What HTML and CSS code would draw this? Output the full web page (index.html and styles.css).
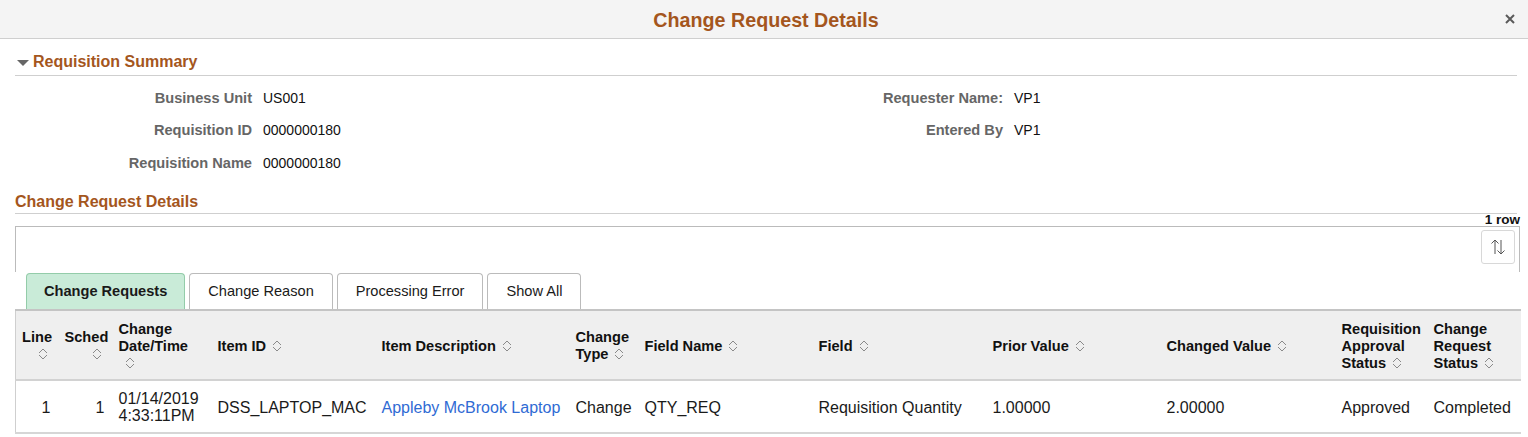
FILE: index.html
```html
<!DOCTYPE html>
<html lang="en">
<head>
<meta charset="utf-8">
<title>Change Request Details</title>
<link rel="stylesheet" href="styles.css">
</head>
<body>
<header class="topbar">
  <div></div>
  <h1 class="title">Change Request Details</h1>
  <button class="close" aria-label="Close">
    <svg width="10" height="10" viewBox="0 0 10 10"><path d="M1 1 L9 9 M9 1 L1 9" stroke="#5a5a5a" stroke-width="2" fill="none"/></svg>
  </button>
</header>

<main class="content">
  <h2 class="section-head">
    <svg class="caret" width="12" height="6" viewBox="0 0 12 6"><path d="M0 0 H12 L6 6 Z" fill="#666"/></svg>
    <span>Requisition Summary</span>
  </h2>

  <div class="fields">
    <div class="lbl">Business Unit</div><div class="val">US001</div>
    <div class="lbl">Requester Name:</div><div class="val">VP1</div>
    <div class="lbl">Requisition ID</div><div class="val">0000000180</div>
    <div class="lbl">Entered By</div><div class="val">VP1</div>
    <div class="lbl">Requisition Name</div><div class="val">0000000180</div>
    <div></div><div></div>
  </div>

  <h3 class="sub-head">Change Request Details</h3>
  <div class="rowcount">1 row</div>

  <div class="toolbox">
    <button class="sortbtn" aria-label="Sort">
      <svg width="16" height="18" viewBox="0 0 16 18"><path d="M5 16 V2 M1.5 5.5 L5 2 L8.5 5.5 M11 2 V16 M7.5 12.5 L11 16 L14.5 12.5" stroke="#555" stroke-width="1" fill="none"/></svg>
    </button>
  </div>

  <div class="tabs">
    <div class="tab active">Change Requests</div>
    <div class="tab">Change Reason</div>
    <div class="tab">Processing Error</div>
    <div class="tab">Show All</div>
  </div>

  <table class="grid">
    <colgroup>
      <col class="c-line"><col class="c-sched"><col class="c-date"><col class="c-item"><col class="c-desc"><col class="c-type"><col class="c-fname"><col class="c-field"><col class="c-prior"><col class="c-changed"><col class="c-appr"><col class="c-status">
    </colgroup>
    <thead>
      <tr>
        <th class="num">Line<br><svg class="sort sort-r" width="10" height="12" viewBox="0 0 10 12"><path d="M1 5 L5 1 L9 5 M1 7 L5 11 L9 7" stroke="#8a8a8a" fill="none"/></svg></th>
        <th class="num">Sched<br><svg class="sort sort-r" width="10" height="12" viewBox="0 0 10 12"><path d="M1 5 L5 1 L9 5 M1 7 L5 11 L9 7" stroke="#8a8a8a" fill="none"/></svg></th>
        <th>Change<br>Date/Time<br><svg class="sort" width="10" height="12" viewBox="0 0 10 12"><path d="M1 5 L5 1 L9 5 M1 7 L5 11 L9 7" stroke="#8a8a8a" fill="none"/></svg></th>
        <th>Item ID<svg class="sort" width="10" height="12" viewBox="0 0 10 12"><path d="M1 5 L5 1 L9 5 M1 7 L5 11 L9 7" stroke="#8a8a8a" fill="none"/></svg></th>
        <th>Item Description<svg class="sort" width="10" height="12" viewBox="0 0 10 12"><path d="M1 5 L5 1 L9 5 M1 7 L5 11 L9 7" stroke="#8a8a8a" fill="none"/></svg></th>
        <th>Change<br>Type<svg class="sort" width="10" height="12" viewBox="0 0 10 12"><path d="M1 5 L5 1 L9 5 M1 7 L5 11 L9 7" stroke="#8a8a8a" fill="none"/></svg></th>
        <th>Field Name<svg class="sort" width="10" height="12" viewBox="0 0 10 12"><path d="M1 5 L5 1 L9 5 M1 7 L5 11 L9 7" stroke="#8a8a8a" fill="none"/></svg></th>
        <th>Field<svg class="sort" width="10" height="12" viewBox="0 0 10 12"><path d="M1 5 L5 1 L9 5 M1 7 L5 11 L9 7" stroke="#8a8a8a" fill="none"/></svg></th>
        <th>Prior Value<svg class="sort" width="10" height="12" viewBox="0 0 10 12"><path d="M1 5 L5 1 L9 5 M1 7 L5 11 L9 7" stroke="#8a8a8a" fill="none"/></svg></th>
        <th>Changed Value<svg class="sort" width="10" height="12" viewBox="0 0 10 12"><path d="M1 5 L5 1 L9 5 M1 7 L5 11 L9 7" stroke="#8a8a8a" fill="none"/></svg></th>
        <th>Requisition<br>Approval<br>Status<svg class="sort" width="10" height="12" viewBox="0 0 10 12"><path d="M1 5 L5 1 L9 5 M1 7 L5 11 L9 7" stroke="#8a8a8a" fill="none"/></svg></th>
        <th>Change<br>Request<br>Status<svg class="sort" width="10" height="12" viewBox="0 0 10 12"><path d="M1 5 L5 1 L9 5 M1 7 L5 11 L9 7" stroke="#8a8a8a" fill="none"/></svg></th>
      </tr>
    </thead>
    <tbody>
      <tr>
        <td class="num">1</td>
        <td class="num">1</td>
        <td>01/14/2019<br>4:33:11PM</td>
        <td>DSS_LAPTOP_MAC</td>
        <td><a class="link" href="#">Appleby McBrook Laptop</a></td>
        <td>Change</td>
        <td>QTY_REQ</td>
        <td>Requisition Quantity</td>
        <td>1.00000</td>
        <td>2.00000</td>
        <td>Approved</td>
        <td>Completed</td>
      </tr>
    </tbody>
  </table>
</main>
</body>
</html>
```

FILE: styles.css
```css
* { box-sizing: border-box; }

body {
  margin: 0;
  font-family: "Liberation Sans", Arial, sans-serif;
  color: #222;
  background: #fff;
}

.topbar {
  height: 39px;
  background: #f4f4f4;
  border-bottom: 1px solid #cfcfcf;
  display: grid;
  grid-template-columns: 1fr auto 1fr;
  align-items: center;
}

.title {
  margin: 0 0 0 4px;
  font-size: 19.7px;
  font-weight: bold;
  color: #a4561d;
  line-height: 24px;
  padding-top: 1px;
}

.close {
  justify-self: end;
  margin-right: 13px;
  border: none;
  background: none;
  padding: 0;
  width: 10px;
  height: 10px;
  display: flex;
}

.content {
  padding: 0 8px 0 15px;
}

.section-head {
  margin: 13px 3px 0 0;
  font-size: 16px;
  font-weight: bold;
  color: #a4561d;
  line-height: 20px;
  padding: 0 0 3px 2px;
  border-bottom: 1px solid #cfcfcf;
  display: flex;
  align-items: center;
  gap: 4px;
}

.caret { margin-top: 1px; }

.fields {
  margin-top: 5px;
  display: grid;
  grid-template-columns: 237px 492px 237px 1fr;
  grid-auto-rows: 32.5px;
  column-gap: 11px;
  align-items: center;
}

.lbl {
  text-align: right;
  font-weight: bold;
  font-size: 14.6px;
  color: #666;
  white-space: nowrap;
  padding-top: 1px;
}

.val {
  font-size: 14px;
  color: #111;
  padding-top: 1px;
}

.sub-head {
  margin: 13.5px 3px 0 0;
  font-size: 16px;
  font-weight: bold;
  color: #a4561d;
  line-height: 20px;
  padding-bottom: 1px;
  border-bottom: 1px solid #cfcfcf;
}

.rowcount {
  text-align: right;
  font-weight: bold;
  font-size: 13.5px;
  line-height: 12px;
  color: #111;
}

.toolbox {
  border: 1px solid #bbb;
  border-bottom: none;
  padding: 3px 4px 8px 0;
  display: flex;
  justify-content: flex-end;
}

.sortbtn {
  width: 34px;
  height: 34px;
  border: 1px solid #d8d8d8;
  border-radius: 3px;
  background: #fff;
  display: flex;
  align-items: center;
  justify-content: center;
  padding: 0;
}

.tabs {
  display: flex;
  gap: 4px;
  padding-left: 11px;
  margin-top: 1px;
}

.tab {
  height: 36px;
  border: 1px solid #bbb;
  border-bottom: none;
  border-radius: 4px 4px 0 0;
  padding: 0 18px;
  font-size: 14.6px;
  line-height: 35px;
  color: #1a1a1a;
  background: #fff;
  white-space: nowrap;
}

.tab.active {
  background: #c9ebd8;
  border-color: #93cca9;
  font-weight: bold;
  padding: 0 17px;
}

.grid {
  width: 100%;
  table-layout: fixed;
  border-collapse: collapse;
  border-left: 1px solid #cfcfcf;
}

.c-line { width: 43px; }
.c-sched { width: 54px; }
.c-date { width: 99px; }
.c-item { width: 164px; }
.c-desc { width: 194px; }
.c-type { width: 69px; }
.c-fname { width: 174px; }
.c-field { width: 174px; }
.c-prior { width: 174px; }
.c-changed { width: 175px; }
.c-appr { width: 92px; }
.c-status { width: 93px; }

.grid thead tr {
  background: #efefef;
  border-top: 2px solid #c4c4c4;
  border-bottom: 2px solid #d2d2d2;
}

.grid th {
  height: 70px;
  padding: 2px 6px 0;
  text-align: left;
  vertical-align: middle;
  font-size: 14.6px;
  font-weight: bold;
  line-height: 17px;
  color: #111;
  white-space: nowrap;
}

.grid th.num {
  text-align: right;
  padding-right: 7px;
}

.sort {
  margin-left: 6px;
  vertical-align: -1px;
}

.sort-r {
  margin-left: 0;
  margin-right: 4px;
}

.grid tbody tr {
  border-bottom: 2px solid #d6d6d6;
}

.grid td {
  height: 53px;
  padding: 1px 6px 0;
  vertical-align: middle;
  font-size: 16px;
  line-height: 17px;
  color: #1a1a1a;
  white-space: nowrap;
}

.grid td.num {
  text-align: right;
  padding-right: 8px;
}

.link {
  color: #2f6bd4;
  text-decoration: none;
}
```
